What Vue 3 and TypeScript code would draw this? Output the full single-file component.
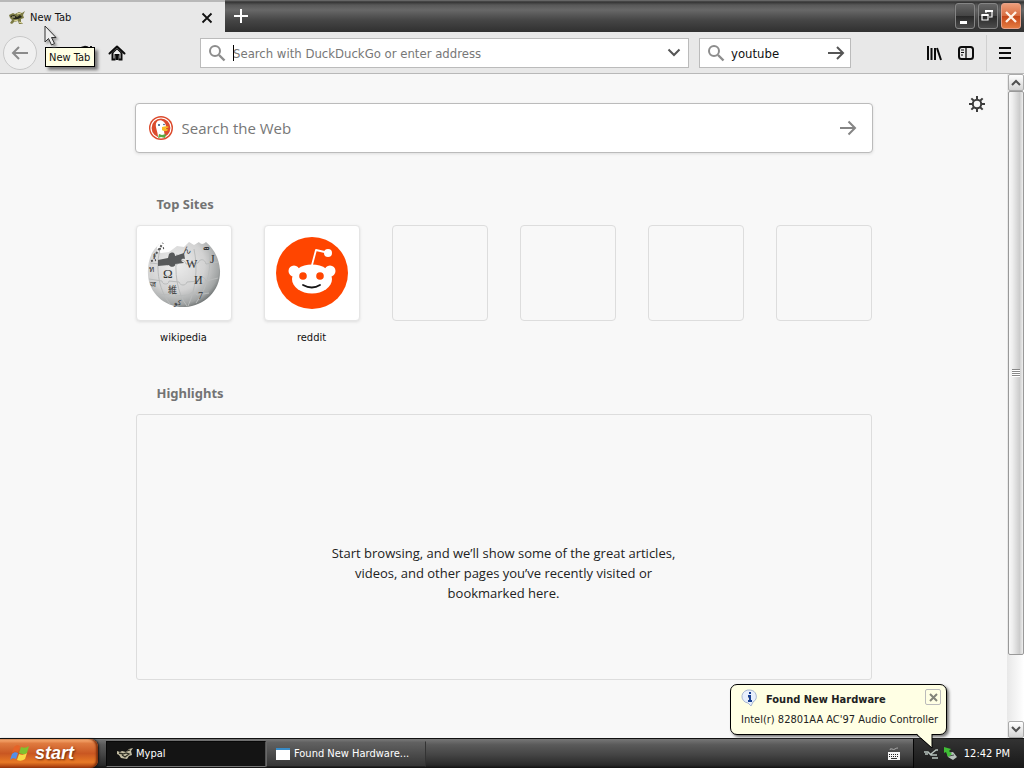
<script setup lang="ts">
import { ref } from 'vue'

const address = ref('')
const query = ref('youtube')
const webQuery = ref('')
const emptySites = [1, 2, 3, 4]
const gearTeeth = [0, 45, 90, 135, 180, 225, 270, 315]
</script>

<template>
  <div class="screen">
    <header class="titlebar">
      <div class="tab">
        <svg class="fox" viewBox="0 0 16 16" aria-hidden="true">
          <path d="M0 5 4 3 6 4 10 2 13 3 16 1 14 5 15 8 12 9 12 12 14 14 10 14 9 11 5 12 3 14 1 13 3 10 1 8Z" fill="#7c7b45" />
          <path d="M1 6 5 5 8 7 11 5 13 7 9 9 5 9Z" fill="#25251b" />
          <path d="M3 7h3M8 4l4-1M5 11l4-1M10 12l3 1" stroke="#e2daa0" stroke-width="1.2" />
        </svg>
        <span class="tab-title">New Tab</span>
        <button class="tab-close" aria-label="Close tab">
          <svg width="12" height="12" viewBox="0 0 12 12"><path d="M1.500 1.500 10.500 10.500M10.500 1.500 1.500 10.500" stroke="#111" stroke-width="1.800" /></svg>
        </button>
      </div>
      <button class="add-tab" aria-label="Open a new tab">
        <svg width="16" height="16" viewBox="0 0 16 16"><path d="M8 1v14M1 8h14" stroke="#fff" stroke-width="2" /></svg>
      </button>
      <div class="window-buttons">
        <button class="win" aria-label="Minimize"><svg viewBox="0 0 20 25"><path d="M5 18.500h7" stroke="#fff" stroke-width="3" /></svg></button>
        <button class="win" aria-label="Restore"><svg viewBox="0 0 20 25" fill="none" stroke="#fff"><path d="M8 9V7h6v6h-3" stroke-width="1.200" /><path d="M4 11h6v5H4Z" stroke-width="1.200" /><path d="M7 7h8M3.500 11h7" stroke-width="1.800" /></svg></button>
        <button class="win close" aria-label="Close"><svg viewBox="0 0 20 25"><path d="m5 8 10 10M15 8 5 18" stroke="#fff2e6" stroke-width="2.300" /></svg></button>
      </div>
    </header>

    <nav class="toolbar">
      <button class="back" aria-label="Back">
        <svg width="18" height="16" viewBox="0 0 18 16" fill="none" stroke="#8b8b8b" stroke-width="2"><path d="M8 2 2 8l6 6M2 8h15" /></svg>
      </button>
      <button class="tool reload" aria-label="Reload">
        <svg width="16" height="16" viewBox="0 0 16 16" fill="none" stroke="#111" stroke-width="2"><path d="M13.500 10A6 6 0 1 1 12 3.500" /><path d="M14 1v5H9" /></svg>
      </button>
      <button class="tool home" aria-label="Home">
        <svg width="18" height="18" viewBox="0 0 18 18"><path d="m1.500 9.500 7.500-7 7.500 7" fill="none" stroke="#0b0b0b" stroke-width="2" stroke-linejoin="round" stroke-linecap="round" /><path d="M3.500 9v7.500h4v-5h3v5h4V9L9 4Z" fill="#0b0b0b" /><path d="M9 5.500 5.500 9v5.500h1V10h5v4.500h1V9Z" fill="#efefef" /><path d="M7.500 11h3v5h-3Z" fill="#0b0b0b" /></svg>
      </button>
      <label class="field address">
        <svg class="lens" viewBox="0 0 18 18" fill="none" stroke="#8d8d8d"><circle cx="7" cy="7" r="5" stroke-width="2" /><path d="m11 11 5.500 5.500" stroke-width="2.400" /></svg>
        <span class="address-input">
          <input v-model="address" type="text" placeholder="Search with DuckDuckGo or enter address" aria-label="Search or enter address" />
          <i class="caret"></i>
        </span>
        <button class="field-button" aria-label="Show history"><svg width="14" height="9" viewBox="0 0 14 9" fill="none" stroke="#555" stroke-width="2"><path d="m1.500 1.500 5.500 5.500 5.500-5.500" /></svg></button>
      </label>
      <label class="field searchbar">
        <svg class="lens" viewBox="0 0 18 18" fill="none" stroke="#8d8d8d"><circle cx="7" cy="7" r="5" stroke-width="2" /><path d="m11 11 5.500 5.500" stroke-width="2.400" /></svg>
        <input v-model="query" type="text" aria-label="Search" />
        <button class="field-button" aria-label="Search now"><svg width="17" height="14" viewBox="0 0 17 14" fill="none" stroke="#555" stroke-width="2"><path d="M0 7h15M9 1l6 6-6 6" /></svg></button>
      </label>
      <div class="tools">
        <button class="tool" aria-label="Library"><svg width="16" height="16" viewBox="0 0 16 16" stroke="#0b0b0b" stroke-width="2"><path d="M2 1v14M5.500 3v12M9 3v12M11 3l4 12" /></svg></button>
        <button class="tool" aria-label="Sidebars"><svg width="16" height="16" viewBox="0 0 16 16" fill="none" stroke="#0b0b0b"><rect x="1" y="2" width="14" height="12" rx="2.500" stroke-width="2" /><path d="M8 2v12" stroke-width="1.300" /><path d="M3 5h3M3 7.500h3M3 10h2" /></svg></button>
        <button class="tool menu" aria-label="Menu"><svg width="14" height="14" viewBox="0 0 14 14" stroke="#0b0b0b" stroke-width="2"><path d="M1 2h12M1 7h12M1 12h12" /></svg></button>
      </div>
    </nav>

    <div class="viewport">
      <main class="page">
        <button class="settings" aria-label="Customize your New Tab page">
          <svg width="16" height="16" viewBox="-8 -8 16 16"><circle r="4.200" fill="none" stroke="#3c3c3c" stroke-width="2" /><path v-for="angle in gearTeeth" :key="angle" d="M0-4.500V-8" stroke="#3c3c3c" stroke-width="2" :transform="`rotate(${angle})`" /></svg>
        </button>
        <div class="column">
          <form class="web-search" @submit.prevent>
            <svg class="duck" viewBox="0 0 24 24" aria-hidden="true">
              <circle cx="12" cy="12" r="12" fill="#dc4b2d" /><circle cx="12" cy="12" r="10" fill="none" stroke="#fff" stroke-width="1.200" />
              <path d="M9 21C9 16 6 11 7 7.500 8 4 12 3 15 6c2 2 2 4 2 6l-2 3 1 6Q12 23 9 21Z" fill="#fff" />
              <path d="M13 11c3-1 6-1 7 0-1 1-3 1-4 2 2 0 3 0 3 1-2 2-5 1-6 0Z" fill="#f8bb24" />
              <path d="m10 18 3 1 4-1-1 4-4-1-3 1Z" fill="#59a940" /><circle cx="10" cy="9" r="1" fill="#28517a" /><circle cx="15" cy="8.500" r=".8" fill="#28517a" />
            </svg>
            <input v-model="webQuery" type="text" placeholder="Search the Web" aria-label="Search the Web" />
            <button aria-label="Search"><svg width="18" height="16" viewBox="0 0 18 16" fill="none" stroke="#858585" stroke-width="2"><path d="M1 8h15M9.500 1.500 16 8l-6.500 6.500" /></svg></button>
          </form>

          <section class="top-sites">
            <h2>Top Sites</h2>
            <div class="sites">
              <a class="site" href="#wikipedia">
                <span class="tile">
                  <svg viewBox="0 0 96 96" aria-hidden="true">
                    <defs><radialGradient id="globe" cx=".38" cy=".35" r=".68"><stop offset="0" stop-color="#eee" /><stop offset=".6" stop-color="#d2d2d2" /><stop offset=".9" stop-color="#a1a4a4" /><stop offset="1" stop-color="#747878" /></radialGradient></defs>
                    <path d="M29 16C17 21 11 34 12 50c1 18 17 33 37 32 20-1 36-17 35-37-1-12-6-21-14-28-3 3-6 2-7 0l-5 3-5-3-5 5-7-1-4 3-4 3-8 1c-4-1-5-5-3-8Z" fill="url(#globe)" />
                    <g fill="none" stroke="#b9bbbb" stroke-width="1"><path d="M24 24c-4 16-3 39 10 55M41 29c-3 17 0 40 10 52M58 24c4 19 2 40-6 57M73 23c3 19-1 39-13 55M14 38l10 1c2-5 6-4 7 1l11-1c1-5 7-5 8 0l12-1c2-5 7-4 8 1l12-2M13 54l13 2c0 4 7 4 7 0l10 1c1 4 7 4 8 0l12-1c0-5 6-5 7 0l12-3M20 69l13 1c2-3 6-3 7 1l13-1c3-4 6-3 8 0l12-2" /></g>
                    <path d="m22 35 10-2 1-4c4-3 6-1 6 2l9-3 1 6c-4-1-5 2-2 3l1 1-9 1c1 3-5 4-6 1l-11 1Z" fill="#57595a" />
                    <g class="letters" fill="#313434"><text x="27" y="53" font-size="13">Ω</text><text x="50" y="43" font-size="12">W</text><text x="58" y="59" font-size="12">И</text><text x="32" y="68" font-size="9">維</text><text x="47" y="28" font-size="8">ん</text><text x="67" y="26" font-size="9">ወ</text><text x="74" y="38" font-size="12">J</text><text x="62" y="74" font-size="10">7</text><text x="17" y="34" font-size="8">វ</text><text x="13" y="47" font-size="8">ท</text><text x="14" y="62" font-size="8">ज</text><text x="38" y="80" font-size="7">کو</text></g>
                    <path d="m18 32 9-14M23 24l5-1M15 36l5-1" stroke="#555" stroke-width="2" stroke-dasharray="2 2" />
                  </svg>
                </span>
                <span class="site-name">wikipedia</span>
              </a>
              <a class="site" href="#reddit">
                <span class="tile">
                  <svg viewBox="0 0 96 96" aria-hidden="true">
                    <circle cx="48" cy="48" r="36" fill="#ff4500" />
                    <path d="m48 40 4-15 13 3" fill="none" stroke="#fff" stroke-width="1.800" stroke-linejoin="round" /><circle cx="64" cy="28" r="4" fill="#fff" />
                    <circle cx="30" cy="46" r="5.500" fill="#fff" /><circle cx="66" cy="46" r="5.500" fill="#fff" />
                    <ellipse cx="48" cy="54" rx="20" ry="14.500" fill="#fff" />
                    <circle cx="39" cy="51" r="3.800" fill="#ff4500" /><circle cx="56" cy="51" r="3.800" fill="#ff4500" />
                    <path d="M39 60q9 5 17 0" fill="none" stroke="#161616" stroke-width="1.800" stroke-linecap="round" />
                  </svg>
                </span>
                <span class="site-name">reddit</span>
              </a>
              <div v-for="site in emptySites" :key="site" class="site"><span class="tile empty"></span></div>
            </div>
          </section>

          <section class="highlights">
            <h2>Highlights</h2>
            <div class="highlight-box"><p>Start browsing, and we’ll show some of the great articles, videos, and other pages you’ve recently visited or bookmarked here.</p></div>
          </section>
        </div>
      </main>
      <div class="scrollbar">
        <button aria-label="Scroll up"><svg width="10" height="7" viewBox="0 0 10 7" fill="none" stroke="#505050" stroke-width="2"><path d="m1 6 4-4 4 4" /></svg></button>
        <div class="thumb"><i class="grip"></i></div>
        <button aria-label="Scroll down"><svg width="10" height="7" viewBox="0 0 10 7" fill="none" stroke="#505050" stroke-width="2"><path d="m1 1 4 4 4-4" /></svg></button>
      </div>
    </div>

    <footer class="taskbar">
      <button class="start">
        <svg width="20" height="18" viewBox="0 0 20 18" aria-hidden="true"><path d="M4 3c2-2 4-2 6-1L8 8C6 7 4 7 2 9Z" fill="#e66327" /><path d="M11 3c3 1 5 1 8-1l-2 7c-3 2-5 1-8 0Z" fill="#80c12f" /><path d="M2 10c2-2 4-2 6-1l-2 6c-2-1-4-1-6 1Z" fill="#548fe7" /><path d="M9 10c3 1 5 1 8-1l-2 6c-3 2-5 2-8 1Z" fill="#f8d946" /></svg>
        <span>start</span>
      </button>
      <button class="task active">
        <svg class="fox" viewBox="0 0 16 16" aria-hidden="true"><path d="M0 5 3 6 5 5 9 6l3-3 4-1-2 3 1 4-3 1-2 3-6-1-2-3-2-1Z" fill="#c4bda3" /><path d="m2 7 4 1 3-1 3 1-4 3-3-2M10 5l3-1" stroke="#303025" stroke-width="1.300" fill="none" /></svg>
        <span>Mypal</span>
      </button>
      <button class="task">
        <svg width="16" height="14" viewBox="0 0 16 14" aria-hidden="true"><path d="M1 1h14v12H1Z" fill="#fff" /><path d="M1 1h14v2H1Z" fill="#388cc8" /></svg>
        <span>Found New Hardware...</span>
      </button>
      <svg class="keyboard" width="14" height="14" viewBox="0 0 14 14" aria-label="Keyboard"><path d="M3 3q0-2 2-1t3 0 3-1" fill="none" stroke="#aaa" /><path d="M1 5h12v8H1Z" fill="#f4f4f4" /><path d="M2 7.500h10M2 9.500h10" stroke="#222" stroke-dasharray="1 1" /><path d="M4 11.500h6" stroke="#333" /></svg>
      <div class="tray">
        <svg width="16" height="14" viewBox="0 0 16 14" fill="none" stroke="#b7c2bd" stroke-width="1.500"><path d="M1 5h4l3 3h6M8 7l5-4h2M9 11h6M2 7h3" /></svg>
        <svg width="14" height="15" viewBox="0 0 14 15"><path d="m4 7 6-1 4 5-4 3-5-3Z" fill="#b8c1bc" /><path d="m6 10 5-1" stroke="#46504b" /><path d="m1 1 7 2-2 2 3 3-4 3-2-5-2 1Z" fill="#3fbd35" /></svg>
        <time>12:42 PM</time>
      </div>
    </footer>

    <div class="tooltip" role="tooltip">New Tab</div>
    <svg class="cursor" viewBox="0 0 14 22" aria-hidden="true"><path d="M1 1v16l3.500-3.500 3 6.500 3-1.500-3-6h4.500Z" fill="#eee" stroke="#333" /></svg>
    <aside class="balloon" role="status">
      <div class="balloon-head">
        <svg width="18" height="18" viewBox="0 0 18 18" aria-hidden="true"><path d="M9 1a7 6.500 0 0 1 3 12l-2 4-3-3A7 6.500 0 0 1 9 1Z" fill="#e7effc" stroke="#a8b7d2" /><path d="M9 3v2M7 7h2v5M7 12h4" stroke="#173f91" stroke-width="2" /></svg>
        <strong>Found New Hardware</strong>
        <button aria-label="Close notification"><svg width="9" height="9" viewBox="0 0 9 9"><path d="m1 1 7 7M8 1 1 8" stroke="#83847a" stroke-width="2" /></svg></button>
      </div>
      <p>Intel(r) 82801AA AC'97 Audio Controller</p>
      <svg class="tail" width="20" height="17" viewBox="0 0 20 17" aria-hidden="true"><path d="M1 0 17 15V0" fill="#ffffe4" /><path d="M1 1 17 15V1" fill="none" stroke="#000" /></svg>
    </aside>
  </div>
</template>

<style>
html, body { margin: 0; }
body { overflow: hidden; }
</style>

<style scoped>
* { box-sizing: border-box; }
.screen { position: relative; display: flex; flex-direction: column; height: 100vh; background: #f8f8f8; color: #111; font: 11px/14px "DejaVu Sans Condensed", "DejaVu Sans", sans-serif; }
button { padding: 0; border: 0; background: none; color: inherit; font: inherit; display: flex; align-items: center; justify-content: center; flex: none; }
input { width: 100%; min-width: 0; padding: 0; border: 0; outline: 0; background: transparent; color: #111; font: inherit; }
input::placeholder { color: #777; opacity: 1; }
svg { flex: none; }
.titlebar { display: flex; flex: none; height: 32px; background: linear-gradient(#777 0, #333 2px, #585858 5px, #686868 10px, #464646 20px, #303030 100%); }
.tab { display: flex; align-items: center; width: 225px; padding: 2px 11px 0 9px; background: #e8e8e8; border-top: 2px solid #b8b8b8; }
.fox { width: 16px; height: 16px; }
.tab-title { flex: 1; padding-left: 5px; }
.tab-close { width: 14px; height: 18px; }
.add-tab { width: 32px; }
.window-buttons { display: flex; gap: 3px; align-items: center; margin-left: auto; padding-right: 3px; }
.win { width: 20px; height: 26px; border: 1px solid #858585; border-radius: 3px; background: linear-gradient(#666, #444 50%, #292929 51%, #4b4b4b); box-shadow: 0 0 1px #111; }
.win svg { width: 20px; height: 25px; }
.win.close { border-color: #e6a189; background: linear-gradient(#ed9d79, #d76c40 50%, #c54618 51%, #e47b42); }
.toolbar { display: flex; align-items: center; flex: none; height: 42px; padding: 0 8px 0 3px; border-bottom: 1px solid #b8b8b8; background: #e8e8e8; }
.back { width: 34px; height: 34px; border: 1px solid #c8c8c8; border-radius: 50%; background: #f0f0f0; }
.tool { width: 32px; height: 32px; }
.reload { margin-left: 32px; }
.home { margin-right: 67px; }
.field { display: flex; align-items: center; height: 30px; border: 1px solid #bbb; background: #fff; font-size: 13px; line-height: 18px; }
.field input { padding-top: 2px; }
.lens { width: 18px; height: 18px; margin: 0 7px; }
.address { flex: 1; min-width: 100px; }
.address-input { display: flex; position: relative; flex: 1; min-width: 0; }
.caret { position: absolute; left: 0; top: 2px; width: 1px; height: 16px; background: #000; }
.field-button { width: 28px; height: 28px; }
.searchbar { width: 152px; margin-left: 10px; }
.searchbar .lens { margin-right: 6px; }
.searchbar input { flex: 1; }
.tools { display: flex; align-items: center; margin-left: 67px; }
.menu { width: 22px; margin-left: 4px; padding-left: 7px; height: 36px; border-left: 1px solid #d0d0d0; box-sizing: content-box; }
.viewport { display: flex; flex: 1; min-height: 0; }
.page { position: relative; flex: 1; min-width: 0; padding-top: 29px; overflow: hidden; }
.settings { position: absolute; top: 20px; right: 20px; width: 20px; height: 20px; }
.column { width: 738px; max-width: calc(100% - 80px); margin: auto; }
.web-search { display: flex; align-items: center; height: 50px; padding: 0 15px 0 13px; border: 1px solid #bbb; border-radius: 4px; background: #fff; box-shadow: 0 1px 3px #ddd; font: 15px/20px "Open Sans", "Noto Sans", sans-serif; }
.duck { width: 24px; height: 24px; margin-right: 9px; }
h2 { margin: 0 0 11px 21px; color: #737373; font: bold 13px/20px "Noto Sans", sans-serif; }
.top-sites { padding: 41px 1px 0; }
.sites { display: flex; justify-content: space-between; gap: 12px; }
.site { display: flex; flex-direction: column; align-items: center; gap: 9px; width: 96px; color: #111; text-decoration: none; }
.site-name { line-height: 15px; }
.tile { display: flex; align-items: center; justify-content: center; width: 96px; height: 96px; border: 1px solid #e5e5e5; border-radius: 4px; background: #fff; box-shadow: 0 1px 3px #ddd; overflow: hidden; }
.tile.empty { border-color: #ddd; background: #f8f8f8; box-shadow: none; }
.tile svg { width: 96px; height: 96px; }
.letters { font-family: "Liberation Serif", "Noto Sans CJK JP", serif; }
.highlights { padding: 38px 1px 0; }
.highlight-box { display: flex; justify-content: center; align-items: center; height: 266px; padding-top: 52px; border: 1px solid #ddd; border-radius: 3px; }
.highlight-box p { width: 350px; margin: 0; text-align: center; color: #222; font: 13px/20px "Open Sans", "Noto Sans", sans-serif; }
.scrollbar { display: flex; flex-direction: column; flex: none; width: 17px; padding: 0 0 0 1px; background: linear-gradient(90deg, #e8e8e8, #fff); }
.scrollbar button { width: 16px; height: 17px; border: 1px solid #aaa; border-radius: 2px; background: linear-gradient(#fff, #d4d4d4); }
.thumb { display: grid; place-items: center; height: 85%; margin-bottom: auto; border: 1px solid #999; border-radius: 2px; background: linear-gradient(90deg, #f8f8f8, #eee 25%, #ddd 50%, #ccc 75%, #eee); }
.grip { width: 8px; height: 8px; background: repeating-linear-gradient(#888 0, #888 1px, #fff 1px, #fff 2px); }
.taskbar { display: flex; flex: none; height: 30px; border-top: 1px solid #111; background: linear-gradient(#777, #5a5a5a 20%, #444 55%, #292929 90%, #111); color: #fff; }
.start { justify-content: flex-start; width: 98px; margin-right: 8px; padding: 0 0 1px 10px; gap: 5px; border-radius: 0 8px 8px 0; background: linear-gradient(#ffb77e, #df7b40 15%, #c95722 50%, #e87925 80%, #9d350d); box-shadow: inset -2px 0 2px #83320e, 1px 0 2px #111; color: #fff; font: italic bold 18px/24px "Liberation Sans", sans-serif; text-shadow: 1px 1px 2px #6c2b0b; }
.task { justify-content: flex-start; gap: 3px; width: 160px; margin: 2px 0 1px; padding-left: 10px; border: 1px solid #737373; border-color: #686868 #333 #222 #686868; background: linear-gradient(#626262, #363636); }
.task.active { border-color: #080808 #555 #777 #080808; background: #141414; }
.task:not(.active) { padding-left: 8px; }
.keyboard { margin: 8px 12px 0 auto; }
.tray { display: flex; align-items: center; gap: 4px; padding: 0 14px 0 9px; border-left: 1px solid #050505; background: linear-gradient(#333, #181818); }
.tray time { margin-left: 3px; }
.tooltip { position: absolute; left: 45px; top: 47px; padding: 3px 4px 1px 3px; border: 1px solid #000; background: #ffffe4; box-shadow: 3px 3px 3px #777; }
.cursor { position: absolute; left: 44px; top: 25px; width: 14px; height: 22px; filter: drop-shadow(2px 2px 1px #999); }
.balloon { position: absolute; right: 77px; bottom: 33px; width: 217px; height: 51px; padding: 4px 5px 0 10px; border: 1px solid #000; border-radius: 7px; background: #ffffe4; box-shadow: 2px 2px 3px #777; color: #222; white-space: nowrap; }
.balloon-head { display: flex; align-items: center; }
.balloon strong { flex: 1; padding: 3px 0 0 7px; }
.balloon-head button { width: 16px; height: 16px; margin-bottom: 2px; border: 1px solid #bbb; border-radius: 2px; }
.balloon p { margin: 6px 0 0; }
.tail { position: absolute; right: 11px; bottom: -16px; }
</style>
